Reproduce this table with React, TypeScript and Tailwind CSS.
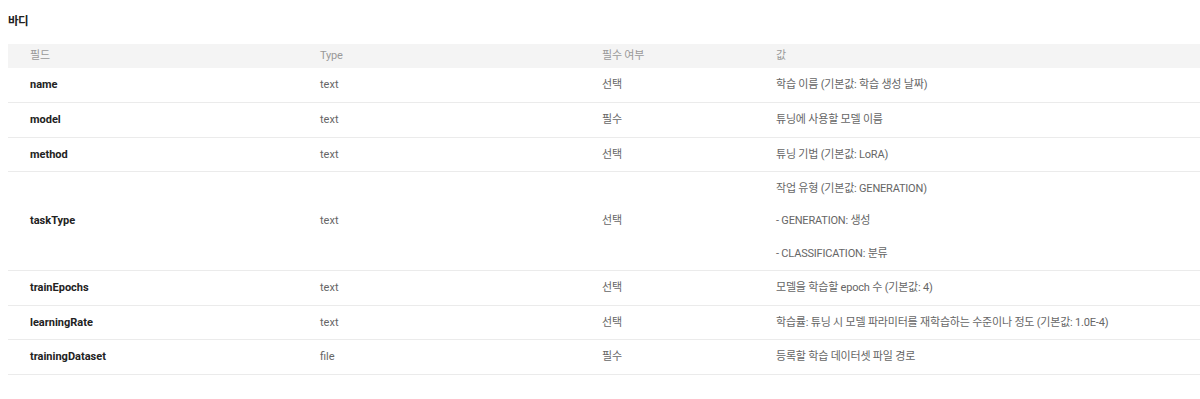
const rows: { field: string; type: string; req: string; value: string[] }[] = [
  { field: 'name', type: 'text', req: '선택', value: ['학습 이름 (기본값: 학습 생성 날짜)'] },
  { field: 'model', type: 'text', req: '필수', value: ['튜닝에 사용할 모델 이름'] },
  { field: 'method', type: 'text', req: '선택', value: ['튜닝 기법 (기본값: LoRA)'] },
  {
    field: 'taskType',
    type: 'text',
    req: '선택',
    value: ['작업 유형 (기본값: GENERATION)', '- GENERATION: 생성', '- CLASSIFICATION: 분류'],
  },
  { field: 'trainEpochs', type: 'text', req: '선택', value: ['모델을 학습할 epoch 수 (기본값: 4)'] },
  {
    field: 'learningRate',
    type: 'text',
    req: '선택',
    value: ['학습률: 튜닝 시 모델 파라미터를 재학습하는 수준이나 정도 (기본값: 1.0E-4)'],
  },
  { field: 'trainingDataset', type: 'file', req: '필수', value: ['등록할 학습 데이터셋 파일 경로'] },
];

export default function App() {
  return (
    <div
      className="min-h-screen bg-white pl-2 pt-3"
      style={{ fontFamily: 'Roboto, "Noto Sans CJK KR", sans-serif' }}
    >
      <h3 className="text-[11.5px] leading-[18px] font-semibold text-[#222] mb-[14px] tracking-[-0.5px]">바디</h3>
      <table className="w-full border-collapse text-[11px] leading-[17.5px] text-left">
        <thead>
          <tr className="bg-[#f4f4f4] text-[#999] tracking-[-0.2px]">
            <th className="w-[290px] h-[24px] pl-[22px] py-0 font-normal">필드</th>
            <th className="w-[282px] h-[24px] pl-[22px] py-0 font-normal">Type</th>
            <th className="w-[174px] h-[24px] pl-[22px] py-0 font-normal">필수 여부</th>
            <th className="h-[24px] pl-[22px] py-0 font-normal">값</th>
          </tr>
        </thead>
        <tbody>
          {rows.map((r) => (
            <tr key={r.field} className="border-b border-[#ebebeb]">
              <td className="h-[34.5px] pl-[22px] py-2 font-bold text-[#222]">{r.field}</td>
              <td className="h-[34.5px] pl-[22px] py-2 text-[#666]">{r.type}</td>
              <td className="h-[34.5px] pl-[22px] py-2 text-[#666] tracking-[-0.2px]">{r.req}</td>
              <td className="h-[34.5px] pl-[22px] py-2 text-[#666] tracking-[-0.2px]">
                <div className="flex flex-col gap-[14.75px]">
                  {r.value.map((v) => (
                    <p key={v}>{v}</p>
                  ))}
                </div>
              </td>
            </tr>
          ))}
        </tbody>
      </table>
    </div>
  );
}
